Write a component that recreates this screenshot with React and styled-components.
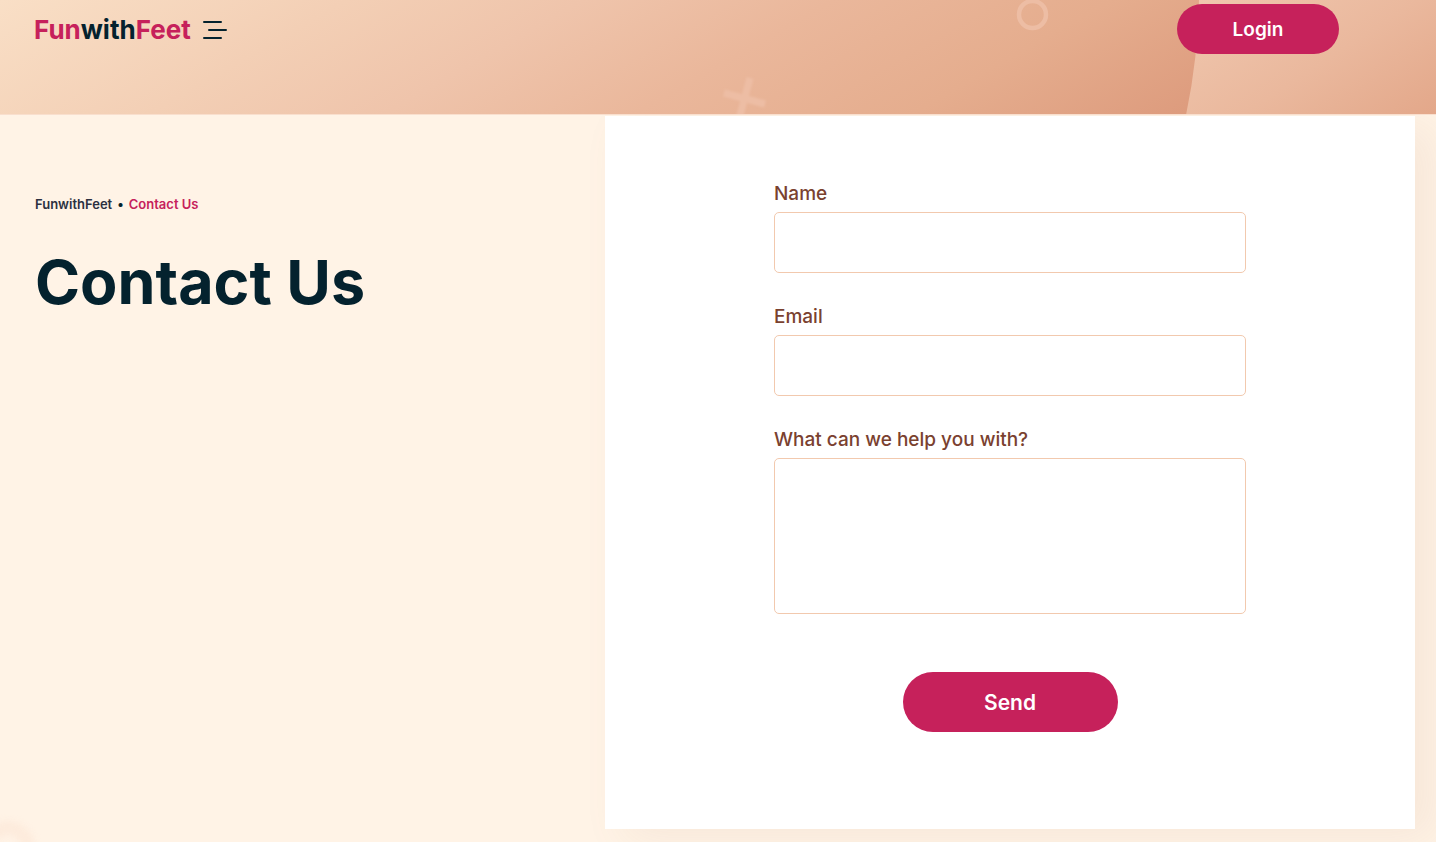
import React, { useState } from 'react'
import styled, { createGlobalStyle } from 'styled-components'

function HeaderArt() {
  return (
    <Art viewBox="0 0 1436 115" preserveAspectRatio="xMidYMin slice" aria-hidden="true">
      <defs>
        <linearGradient id="skin" gradientUnits="userSpaceOnUse" x1="0" y1="0" x2="341" y2="598">
          <stop offset="0" stopColor="#f9dfc6" />
          <stop offset="0.25" stopColor="#f3cfb5" />
          <stop offset="0.42" stopColor="#efc4ab" />
          <stop offset="0.6" stopColor="#eab79b" />
          <stop offset="0.8" stopColor="#e5ad8e" />
          <stop offset="1" stopColor="#dd9b7d" />
        </linearGradient>
        <linearGradient id="heel" gradientUnits="userSpaceOnUse" x1="1200" y1="0" x2="1330" y2="200">
          <stop offset="0" stopColor="#f0c7ae" />
          <stop offset="0.5" stopColor="#eab89d" />
          <stop offset="1" stopColor="#e2a587" />
        </linearGradient>
        <filter id="soft" x="-20%" y="-20%" width="140%" height="140%">
          <feGaussianBlur stdDeviation="1.2" />
        </filter>
      </defs>
      <rect width="1436" height="115" fill="url(#skin)" />
      <path d="M1199 0 Q1198 58 1186 115 H1436 V0 Z" fill="url(#heel)" />
      <circle cx="1032.500" cy="14.500" r="13.500" fill="none" stroke="#edbda4" strokeWidth="4.500" />
      <g stroke="#edbda4" strokeWidth="7" filter="url(#soft)">
        <path d="M724 93 L765 104" />
        <path d="M750 78 L739 119" />
      </g>
    </Art>
  )
}

function Field(props) {
  return (
    <FieldGroup>
      <Label htmlFor={props.id}>{props.label}</Label>
      {props.multiline ? (
        <MessageArea id={props.id} name={props.id} />
      ) : (
        <TextInput id={props.id} name={props.id} type={props.type} />
      )}
    </FieldGroup>
  )
}

function App() {
  const [open, setOpen] = useState(false)

  return (
    <>
      <GlobalStyle />
      <Header>
        <HeaderArt />
        <Brand>
          <Logo href="#">
            Fun<LogoDark>with</LogoDark>Feet
          </Logo>
          <MenuButton aria-label="Menu" aria-expanded={open} onClick={() => setOpen(!open)}>
            <svg width="24" height="18" viewBox="0 0 24 18" stroke="#04222e" strokeWidth="2" strokeLinecap="round">
              <path d="M1 1H18M6 9H23M1 17H18" />
            </svg>
          </MenuButton>
        </Brand>
        <LoginButton>Login</LoginButton>
      </Header>
      <Main>
        <Ring viewBox="0 0 80 80" aria-hidden="true">
          <circle cx="40" cy="40" r="20" />
        </Ring>
        <Intro>
          <Breadcrumb>
            <Crumb href="#">FunwithFeet</Crumb>
            <span>•</span>
            <Crumb href="#" $active>
              Contact Us
            </Crumb>
          </Breadcrumb>
          <Title>Contact Us</Title>
        </Intro>
        <Card>
          <Form onSubmit={(e) => e.preventDefault()}>
            <Field id="name" label="Name" type="text" />
            <Field id="email" label="Email" type="email" />
            <Field id="message" label="What can we help you with?" multiline />
            <SendButton type="submit">Send</SendButton>
          </Form>
        </Card>
      </Main>
    </>
  )
}

export default App

const GlobalStyle = createGlobalStyle`
  * {
    box-sizing: border-box;
  }
  body {
    margin: 0;
    background: #fff3e6;
    color: #04222e;
    font-family: Inter, 'Liberation Sans', sans-serif;
  }
`

const Header = styled.header`
  position: relative;
  display: flex;
  justify-content: space-between;
  align-items: flex-start;
  height: 115px;
  padding: 4px 97px 0 34px;
  border-bottom: 1px solid #f9dfce;
`

const Art = styled.svg`
  position: absolute;
  inset: 0;
  width: 100%;
  height: 100%;
  z-index: -1;
`

const Brand = styled.div`
  display: flex;
  align-items: center;
  gap: 12px;
  height: 52px;
`

const Logo = styled.a`
  color: #c6215b;
  font-size: 26px;
  font-weight: 700;
  line-height: 32px;
  text-decoration: none;
`

const LogoDark = styled.span`
  color: #04222e;
`

const MenuButton = styled.button`
  display: flex;
  padding: 0;
  border: 0;
  background: none;
  cursor: pointer;
`

const PillButton = styled.button`
  border: 0;
  border-radius: 30px;
  background: #c6215b;
  color: white;
  font-family: inherit;
  font-weight: 600;
  cursor: pointer;
`

const LoginButton = styled(PillButton)`
  width: 162px;
  height: 50px;
  font-size: 19px;
`

const SendButton = styled(PillButton)`
  align-self: center;
  width: 215px;
  height: 60px;
  margin-top: 28px;
  font-size: 21px;
`

const Main = styled.main`
  position: relative;
  display: grid;
  grid-template-columns: minmax(0, 605fr) minmax(0, 810fr);
  padding: 1px 21px 13px 0;
  overflow: hidden;
`

const Intro = styled.section`
  padding: 78px 35px 0;
`

const Breadcrumb = styled.nav`
  display: flex;
  gap: 5px;
  font-size: 13px;
  font-weight: 600;
  line-height: 20px;
`

const Crumb = styled.a`
  color: ${(props) => (props.$active ? '#c6215b' : '#2b3040')};
  text-decoration: none;
`

const Title = styled.h1`
  margin: 30px 0 0;
  font-size: 61px;
  font-weight: 700;
  line-height: 76px;
`

const Ring = styled.svg`
  position: absolute;
  left: -32px;
  bottom: -46px;
  width: 80px;
  height: 80px;
  fill: none;
  stroke: #fdebdc;
  stroke-width: 14px;
  filter: blur(3px);
`

const Card = styled.section`
  padding: 64px 24px 97px;
  background: white;
  box-shadow: 20px 10px 40px rgba(170, 120, 90, 0.09);
`

const Form = styled.form`
  display: flex;
  flex-direction: column;
  gap: 30px;
  max-width: 472px;
  margin: 0 auto;
`

const FieldGroup = styled.div`
  display: flex;
  flex-direction: column;
  gap: 4px;
`

const Label = styled.label`
  color: #7a412f;
  font-size: 19px;
  font-weight: 500;
  line-height: 28px;
`

const TextInput = styled.input`
  width: 100%;
  height: 61px;
  padding: 0 16px;
  border: 1px solid #f2c9ae;
  border-radius: 5px;
  background: white;
  font: inherit;
`

const MessageArea = styled.textarea`
  width: 100%;
  height: 156px;
  padding: 16px;
  border: 1px solid #f2c9ae;
  border-radius: 5px;
  background: white;
  font: inherit;
  resize: none;
`
